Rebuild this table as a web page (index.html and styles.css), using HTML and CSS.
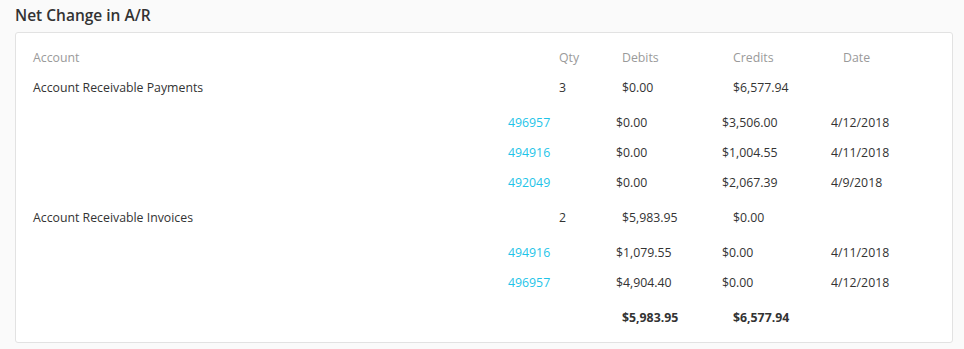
FILE: index.html
```html
<!DOCTYPE html>
<html>
<head>
<meta charset="utf-8">
<link rel="stylesheet" href="styles.css">
</head>
<body>
<h2 class="title">Net Change in A/R</h2>
<div class="card">
  <div class="row head">
    <span>Account</span><span>Qty</span><span>Debits</span><span>Credits</span><span>Date</span>
  </div>

  <div class="row group">
    <span>Account Receivable Payments</span><span>3</span><span>$0.00</span><span>$6,577.94</span><span></span>
  </div>
  <div class="details">
    <div class="row detail"><span></span><a href="#">496957</a><span>$0.00</span><span>$3,506.00</span><span>4/12/2018</span></div>
    <div class="row detail"><span></span><a href="#">494916</a><span>$0.00</span><span>$1,004.55</span><span>4/11/2018</span></div>
    <div class="row detail"><span></span><a href="#">492049</a><span>$0.00</span><span>$2,067.39</span><span>4/9/2018</span></div>
  </div>

  <div class="row group">
    <span>Account Receivable Invoices</span><span>2</span><span>$5,983.95</span><span>$0.00</span><span></span>
  </div>
  <div class="details">
    <div class="row detail"><span></span><a href="#">494916</a><span>$1,079.55</span><span>$0.00</span><span>4/11/2018</span></div>
    <div class="row detail"><span></span><a href="#">496957</a><span>$4,904.40</span><span>$0.00</span><span>4/12/2018</span></div>
  </div>

  <div class="row total">
    <span></span><span></span><span>$5,983.95</span><span>$6,577.94</span><span></span>
  </div>
</div>
</body>
</html>
```
FILE: styles.css
```css
html, body {
  margin: 0;
  padding: 0;
  background: #fafafa;
  font-family: "Open Sans", "Noto Sans", sans-serif;
  color: #333;
}

.title {
  margin: 0;
  padding: 4px 0 0 15px;
  height: 28px;
  box-sizing: border-box;
  font-size: 15.5px;
  font-weight: 600;
  line-height: 22px;
  color: #333;
}

.card {
  margin: 4px 10px 0 15px;
  width: 938px;
  box-sizing: border-box;
  background: #fff;
  border: 1px solid #e2e2e2;
  border-radius: 3px;
  padding: 10px 0 9px 17px;
}

.row {
  display: grid;
  grid-template-columns: 526px 63px 111px 110px 1fr;
  height: 30px;
  align-items: center;
  font-size: 12.3px;
  line-height: 16px;
  white-space: nowrap;
}

.head {
  color: #9a9a9a;
}

.details {
  padding: 5px 0;
}

.detail {
  grid-template-columns: 475px 108px 106px 109px 1fr;
}

.detail a {
  color: #1ec4e8;
  text-decoration: none;
}

.total {
  font-weight: 700;
}
```
